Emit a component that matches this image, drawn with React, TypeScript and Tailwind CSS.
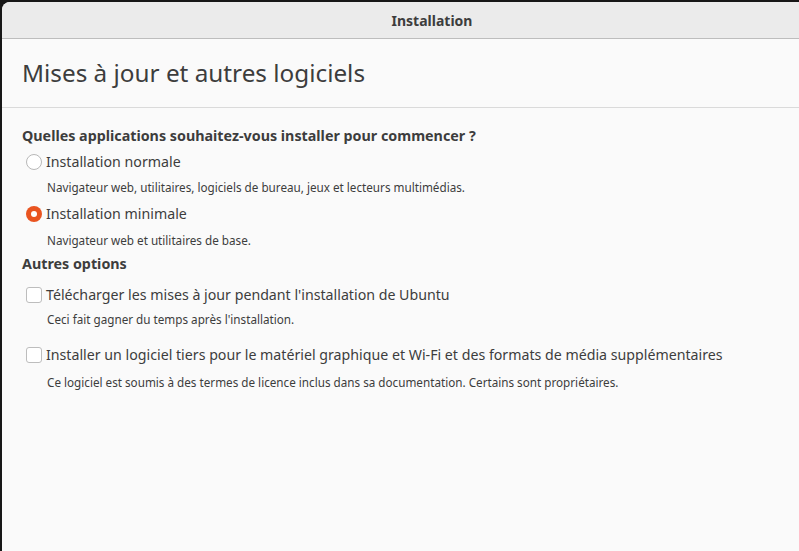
import React from "react";

const font = { fontFamily: '"Noto Sans", "Open Sans", sans-serif' };

function Radio({ checked }: { checked?: boolean }) {
  if (checked) {
    return (
      <span className="flex h-4 w-4 shrink-0 items-center justify-center rounded-full bg-[#e95420]">
        <span className="h-[6px] w-[6px] rounded-full bg-white" />
      </span>
    );
  }
  return <span className="h-4 w-4 shrink-0 rounded-full border border-[#b8b8b8] bg-white" />;
}

function Checkbox() {
  return <span className="h-4 w-4 shrink-0 rounded-[3px] border border-[#bdbdbd] bg-white" />;
}

export default function App() {
  return (
    <div className="h-[551px] w-[799px] overflow-hidden bg-[#171717] pl-[2px] pt-[2px]" style={font}>
      <div className="h-[600px] w-[860px] overflow-hidden rounded-tl-[8px] bg-[#fafafa] text-[#3d3d3d]">
        <div className="flex h-[37px] items-center justify-center border-b border-[#bdbdbd] bg-[#ebebeb] text-[14px] font-bold">
          Installation
        </div>
        <div className="flex h-[69px] items-center border-b border-[#dadada] pl-5 text-[24.3px]">
          Mises à jour et autres logiciels
        </div>
        <div className="flex flex-col pl-5">
          <div className="mt-[18px] flex h-5 items-center text-[14.3px] font-bold">
            Quelles applications souhaitez-vous installer pour commencer ?
          </div>
          <div className="mt-1 flex h-6 items-center gap-1 pl-1 text-[14.2px]">
            <Radio />
            Installation normale
          </div>
          <div className="mt-1 flex h-5 items-center pl-[25px] text-[11.7px]">
            Navigateur web, utilitaires, logiciels de bureau, jeux et lecteurs multimédias.
          </div>
          <div className="mt-1 flex h-6 items-center gap-1 pl-1 text-[14.2px]">
            <Radio checked />
            Installation minimale
          </div>
          <div className="mt-[5px] flex h-5 items-center pl-[25px] text-[11.7px]">
            Navigateur web et utilitaires de base.
          </div>
          <div className="mt-[3px] flex h-5 items-center text-[14.3px] font-bold">Autres options</div>
          <div className="mt-[9px] flex h-6 items-center gap-1 pl-1 text-[14.2px]">
            <Checkbox />
            Télécharger les mises à jour pendant l'installation de Ubuntu
          </div>
          <div className="mt-[3px] flex h-5 items-center pl-[25px] text-[11.7px]">
            Ceci fait gagner du temps après l'installation.
          </div>
          <div className="mt-[13px] flex h-6 items-center gap-1 pl-1 text-[14.2px]">
            <Checkbox />
            Installer un logiciel tiers pour le matériel graphique et Wi-Fi et des formats de média supplémentaires
          </div>
          <div className="mt-1.5 flex h-5 items-center pl-[25px] text-[11.7px]">
            Ce logiciel est soumis à des termes de licence inclus dans sa documentation. Certains sont propriétaires.
          </div>
        </div>
      </div>
    </div>
  );
}
